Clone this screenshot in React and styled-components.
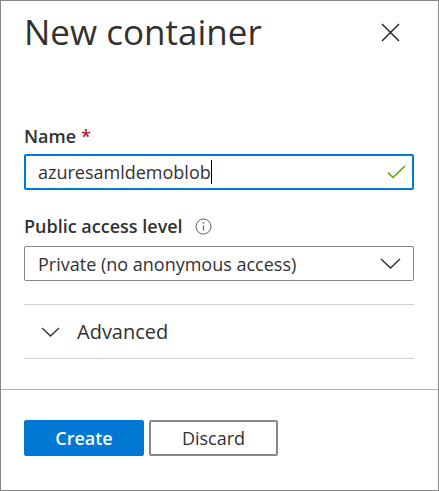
import React from "react";
import styled, { createGlobalStyle } from "styled-components";

const Global = createGlobalStyle`
  html, body { margin: 0; padding: 0; background: #fff; }
  body { font-family: "Open Sans", "Noto Sans", sans-serif; color: #323130; }
  * { box-sizing: border-box; }
`;

const Panel = styled.div`
  width: 439px;
  height: 491px;
  border: 1px solid #8a8886;
  display: flex;
  flex-direction: column;
  background: #fff;
`;

const Header = styled.div`
  display: flex;
  align-items: flex-start;
  justify-content: space-between;
  padding: 7px 38px 0 23px;
`;

const Title = styled.h1`
  margin: 0;
  font-size: 35px;
  font-weight: 400;
  line-height: 48px;
  color: #323130;
`;

const CloseButton = styled.button`
  border: 0;
  background: transparent;
  padding: 0;
  margin-top: 14px;
  width: 20px;
  height: 20px;
  display: flex;
  align-items: center;
  justify-content: center;
  cursor: pointer;
`;

const Body = styled.div`
  flex: 1;
  padding: 0 24px 0 23px;
  display: flex;
  flex-direction: column;
`;

const Label = styled.div`
  display: flex;
  align-items: center;
  gap: 12px;
  font-size: 18px;
  font-weight: 600;
  line-height: 24px;
  margin-top: ${(p) => p.$top}px;
`;

const Required = styled.span`
  color: #a4262c;
  margin-left: -7px;
`;

const InputBox = styled.div`
  margin-top: 6px;
  height: 36px;
  border: 2px solid #0078d4;
  border-radius: 2px;
  display: flex;
  align-items: center;
  padding: 0 6px 0 12px;
`;

const InputText = styled.span`
  flex: 1;
  font-size: 18px;
  line-height: 24px;
  color: #323130;
  display: flex;
  align-items: center;
`;

const Caret = styled.span`
  display: inline-block;
  width: 1px;
  height: 24px;
  background: #000;
`;

const SelectBox = styled.div`
  margin-top: 8px;
  height: 35px;
  border: 1px solid #8a8886;
  border-radius: 2px;
  display: flex;
  align-items: center;
  padding: 0 12px 0 13px;
  font-size: 18px;
  line-height: 24px;
`;

const SelectText = styled.span`
  flex: 1;
`;

const Divider = styled.div`
  height: 1px;
  background: #d2d0ce;
  margin-top: ${(p) => p.$top || 0}px;
`;

const AccordionRow = styled.div`
  height: 53px;
  display: flex;
  align-items: center;
  gap: 17px;
  padding-left: 17px;
  font-size: 20px;
  line-height: 24px;
  color: #323130;
`;

const Footer = styled.div`
  border-top: 1px solid #b3b0ad;
  height: 101px;
  display: flex;
  align-items: flex-start;
  gap: 5px;
  padding: 30px 23px 0;
`;

const Button = styled.button`
  height: 36px;
  width: ${(p) => p.$w}px;
  border-radius: 2px;
  font-family: inherit;
  font-size: 18px;
  font-weight: 600;
  line-height: 24px;
  padding: 0;
  cursor: pointer;
  ${(p) =>
    p.$primary
      ? `background: #0078d4; color: #fff; border: 1px solid #0078d4;`
      : `background: #fff; color: #323130; border: 2px solid #8a8886; font-weight: 400;`}
`;

const Svg = styled.svg`
  display: block;
  flex: none;
`;

export default function App() {
  return (
    <>
      <Global />
      <Panel>
        <Header>
          <Title>New container</Title>
          <CloseButton aria-label="Close">
            <Svg width="19" height="19" viewBox="0 0 19 19">
              <path d="M1 1 L18 18 M18 1 L1 18" stroke="#201f1e" strokeWidth="1.4" fill="none" />
            </Svg>
          </CloseButton>
        </Header>
        <Body>
          <Label $top={68}>
            Name <Required>*</Required>
          </Label>
          <InputBox>
            <InputText>
              azuresamldemoblob
              <Caret />
            </InputText>
            <Svg width="19" height="14" viewBox="0 0 19 14">
              <path d="M1 7.5 L6 12.5 L18 1" stroke="#57a300" strokeWidth="1.5" fill="none" />
            </Svg>
          </InputBox>
          <Label $top={24}>
            Public access level
            <Svg width="17" height="17" viewBox="0 0 17 17">
              <circle cx="8.5" cy="8.5" r="7.5" stroke="#605e5c" strokeWidth="1" fill="none" />
              <path d="M8.5 7.5 V12.5" stroke="#605e5c" strokeWidth="1.2" />
              <circle cx="8.5" cy="5" r="0.8" fill="#605e5c" />
            </Svg>
          </Label>
          <SelectBox>
            <SelectText>Private (no anonymous access)</SelectText>
            <Svg width="21" height="11" viewBox="0 0 21 11">
              <path d="M1 1 L10.5 10 L20 1" stroke="#323130" strokeWidth="1.4" fill="none" />
            </Svg>
          </SelectBox>
          <Divider $top={23} />
          <AccordionRow>
            <Svg width="19" height="10" viewBox="0 0 19 10">
              <path d="M1 1 L9.5 9 L18 1" stroke="#323130" strokeWidth="1.3" fill="none" />
            </Svg>
            Advanced
          </AccordionRow>
          <Divider />
        </Body>
        <Footer>
          <Button $primary $w={120}>Create</Button>
          <Button $w={129}>Discard</Button>
        </Footer>
      </Panel>
    </>
  );
}
